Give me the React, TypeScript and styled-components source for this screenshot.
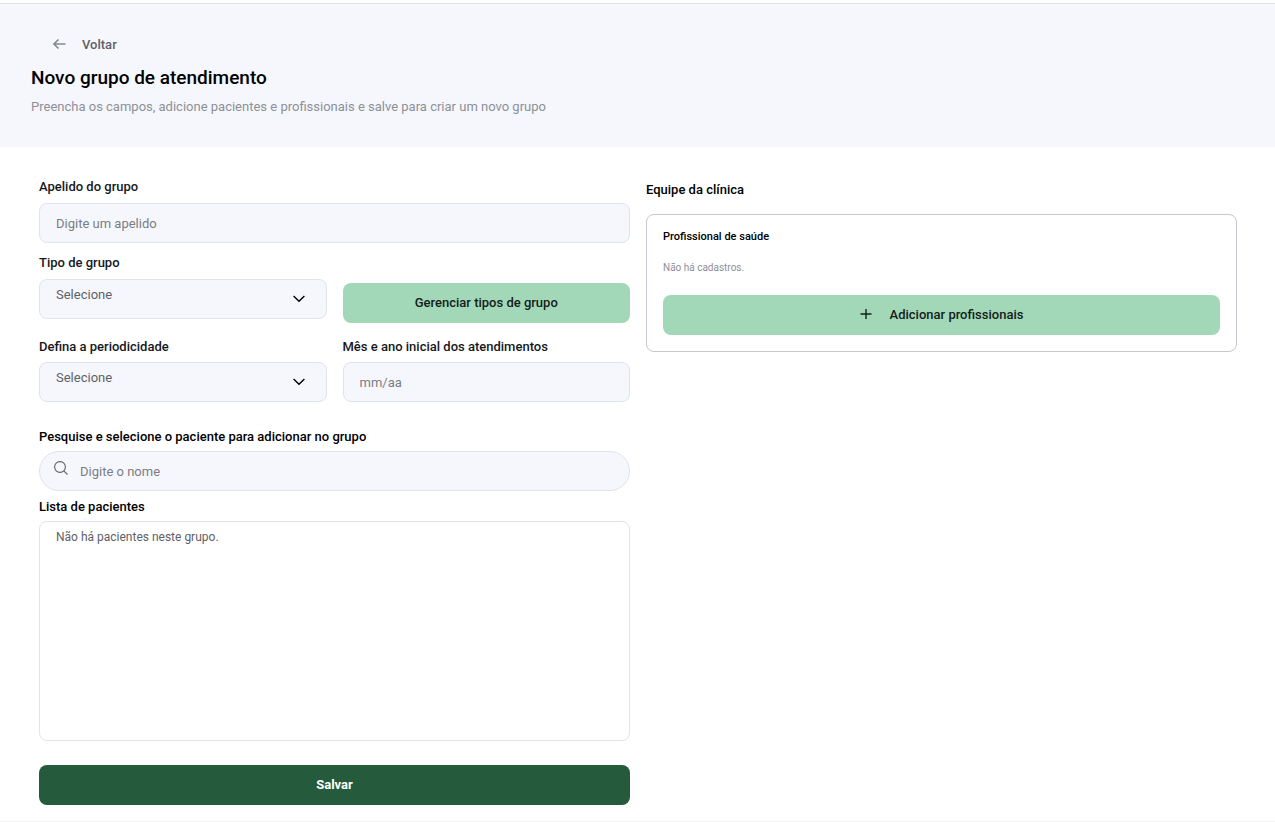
import styled, { createGlobalStyle } from "styled-components";

const App = () => {
  return (
    <>
      <GlobalStyle />
      <Page>
        <Header>
          <BackButton type="button">
            <ArrowIcon />
            Voltar
          </BackButton>
          <Title>Novo grupo de atendimento</Title>
          <Subtitle>
            Preencha os campos, adicione pacientes e profissionais e salve para
            criar um novo grupo
          </Subtitle>
        </Header>
        <Content>
          <Form onSubmit={(e) => e.preventDefault()}>
            <Field $gap={8}>
              <Label htmlFor="apelido">Apelido do grupo</Label>
              <Input id="apelido" placeholder="Digite um apelido" />
            </Field>
            <Row $top={12}>
              <Field $gap={8}>
                <Label htmlFor="tipo">Tipo de grupo</Label>
                <SelectField id="tipo" />
              </Field>
              <BottomCell>
                <Button type="button">Gerenciar tipos de grupo</Button>
              </BottomCell>
            </Row>
            <Row $top={16}>
              <Field $gap={7}>
                <Label htmlFor="periodicidade">Defina a periodicidade</Label>
                <SelectField id="periodicidade" />
              </Field>
              <Field $gap={7}>
                <Label htmlFor="inicio">Mês e ano inicial dos atendimentos</Label>
                <Input id="inicio" placeholder="mm/aa" />
              </Field>
            </Row>
            <SearchGroup $gap={6}>
              <Label htmlFor="paciente" $strong>
                Pesquise e selecione o paciente para adicionar no grupo
              </Label>
              <SearchBox>
                <SearchIcon />
                <SearchInput id="paciente" placeholder="Digite o nome" />
              </SearchBox>
            </SearchGroup>
            <ListGroup $gap={6}>
              <SectionTitle>Lista de pacientes</SectionTitle>
              <PatientList>Não há pacientes neste grupo.</PatientList>
            </ListGroup>
            <SaveButton type="submit">Salvar</SaveButton>
          </Form>
          <Team>
            <SectionTitle>Equipe da clínica</SectionTitle>
            <TeamCard>
              <CardTitle>Profissional de saúde</CardTitle>
              <EmptyText>Não há cadastros.</EmptyText>
              <Button type="button">
                <PlusIcon />
                Adicionar profissionais
              </Button>
            </TeamCard>
          </Team>
        </Content>
      </Page>
    </>
  );
};

const SelectField = ({ id }: { id: string }) => (
  <SelectWrapper>
    <Select id={id} defaultValue="">
      <option value="">Selecione</option>
    </Select>
    <Chevron />
  </SelectWrapper>
);

const ArrowIcon = () => (
  <svg width="14" height="12" viewBox="0 0 14 12" fill="none" aria-hidden>
    <path
      d="M12.5 6H1.5M5.5 1.5L1 6L5.5 10.5"
      stroke="#868a92"
      strokeWidth="1.6"
    />
  </svg>
);

const PlusIcon = () => (
  <svg width="12" height="12" viewBox="0 0 12 12" fill="none" aria-hidden>
    <path d="M6 1V11M0.5 6H11.5" stroke="#14211a" strokeWidth="1.4" />
  </svg>
);

const SearchIcon = () => (
  <svg width="14" height="14" viewBox="0 0 14 14" fill="none" aria-hidden>
    <circle cx="6" cy="6" r="5.4" stroke="#5f6168" strokeWidth="1.1" />
    <path d="M9.8 9.8L13.5 13.5" stroke="#5f6168" strokeWidth="1.1" />
  </svg>
);

const ChevronIcon = ({ className }: { className?: string }) => (
  <svg
    className={className}
    width="12"
    height="8"
    viewBox="0 0 12 8"
    fill="none"
    aria-hidden
  >
    <path d="M0.6 1L6 6.2L11.4 1" stroke="#000" strokeWidth="1.4" />
  </svg>
);

const GlobalStyle = createGlobalStyle`
  * {
    box-sizing: border-box;
  }

  body {
    margin: 0;
    background: #fff;
    font-family: Roboto, sans-serif;
    font-size: 13px;
    line-height: 16px;
  }

  input,
  select,
  button {
    font-family: inherit;
    font-size: inherit;
  }
`;

const Page = styled.div`
  margin-top: 3px;
  border-top: 1px solid #dfe3ea;
  border-bottom: 1px solid #f3f3f5;
`;

const Header = styled.header`
  padding: 32px 31px;
  background: #f5f7fd;
`;

const BackButton = styled.button`
  display: flex;
  align-items: center;
  gap: 15px;
  padding: 0 22px;
  height: 16px;
  border: none;
  background: none;
  color: #5f6168;
  font-weight: 500;
  cursor: pointer;
`;

const Title = styled.h1`
  margin: 13px 0 0;
  color: #000;
  font-size: 19px;
  font-weight: 500;
  line-height: 26px;
`;

const Subtitle = styled.p`
  margin: 8px 0 0;
  color: #8d9097;
  line-height: 16px;
`;

const Content = styled.main`
  display: grid;
  grid-template-columns: 1fr 1fr;
  gap: 16px;
  padding: 32px 38px 16px 39px;

  @media (max-width: 900px) {
    grid-template-columns: 1fr;
  }
`;

const Form = styled.form`
  display: flex;
  flex-direction: column;
`;

const Row = styled.div<{ $top: number }>`
  display: grid;
  grid-template-columns: 1fr 1fr;
  gap: 16px;
  margin-top: ${({ $top }) => $top}px;
`;

const Field = styled.div<{ $gap: number }>`
  display: flex;
  flex-direction: column;
  gap: ${({ $gap }) => $gap}px;
`;

const SearchGroup = styled(Field)`
  margin-top: 27px;
`;

const ListGroup = styled(Field)`
  margin-top: 8px;
`;

const BottomCell = styled.div`
  padding-top: 28px;
`;

const Label = styled.label<{ $strong?: boolean }>`
  color: ${({ $strong }) => ($strong ? "#000" : "#16181c")};
  font-weight: 500;
  line-height: 16px;
`;

const SectionTitle = styled.h2`
  margin: 0;
  color: #000;
  font-size: 13px;
  font-weight: 500;
  line-height: 16px;
`;

const Input = styled.input`
  width: 100%;
  height: 40px;
  padding: 0 16px;
  border: 1px solid #dfe3ee;
  border-radius: 8px;
  background: #f5f7fd;
  color: #5f6168;
  outline: none;

  &::placeholder {
    color: #7b7d85;
  }
`;

const SelectWrapper = styled.div`
  position: relative;
`;

const Select = styled.select`
  display: block;
  width: 100%;
  height: 40px;
  padding: 0 40px 10px 16px;
  border: 1px solid #dfe3ee;
  border-radius: 8px;
  background: #f5f7fd;
  color: #5f6168;
  appearance: none;
  outline: none;
`;

const Chevron = styled(ChevronIcon)`
  position: absolute;
  top: 16px;
  right: 22px;
  pointer-events: none;
`;

const SearchBox = styled.div`
  display: flex;
  gap: 12px;
  height: 40px;
  padding: 0 14px;
  border: 1px solid #dfe3ee;
  border-radius: 20px;
  background: #f5f7fd;

  > svg {
    flex: none;
    margin-top: 9px;
  }
`;

const SearchInput = styled(Input)`
  height: 100%;
  padding: 0;
  border: none;
  background: none;
`;

const PatientList = styled.div`
  height: 220px;
  padding: 7px 16px;
  border: 1px solid #e1e3ed;
  border-radius: 8px;
  color: #5f6168;
  font-size: 12px;
`;

const Button = styled.button`
  display: flex;
  align-items: center;
  justify-content: center;
  gap: 18px;
  width: 100%;
  height: 40px;
  padding: 0 16px 2px;
  border: none;
  border-radius: 8px;
  background: #a2d8b8;
  color: #14211a;
  font-weight: 500;
  cursor: pointer;
`;

const SaveButton = styled(Button)`
  margin-top: 24px;
  background: #255a3c;
  color: #fff;
  font-weight: 700;
`;

const Team = styled.section`
  padding-top: 3px;
`;

const TeamCard = styled.div`
  margin-top: 16px;
  padding: 14px 16px 16px;
  border: 1px solid #c5c7d2;
  border-radius: 8px;
`;

const CardTitle = styled.h3`
  margin: 0;
  color: #000;
  font-size: 11px;
  font-weight: 500;
  line-height: 16px;
`;

const EmptyText = styled.p`
  margin: 15px 0 19px;
  color: #8d9097;
  font-size: 10px;
  line-height: 16px;
`;

export default App;
